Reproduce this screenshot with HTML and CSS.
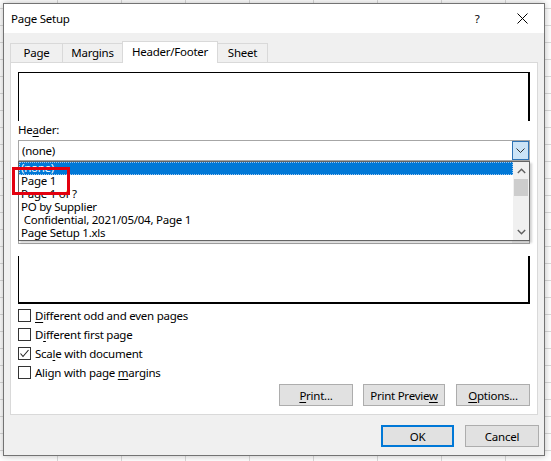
FILE: index.html
```html
<!DOCTYPE html>
<html>
<head>
<meta charset="utf-8">
<link rel="stylesheet" href="styles.css">
</head>
<body>
<div class="dialog">
  <div class="titlebar">
    <span class="title">Page Setup</span>
    <span class="help">?</span>
    <span class="close"><svg width="11" height="11" viewBox="0 0 11 11"><path d="M0.5 0.5 L10.5 10.5 M10.5 0.5 L0.5 10.5" stroke="#000" stroke-width="1" fill="none"/></svg></span>
  </div>
  <div class="content">
    <div class="tabs">
      <div class="tab tab-page">Page</div>
      <div class="tab tab-margins">Margins</div>
      <div class="tab tab-hf active">Header/Footer</div>
      <div class="tab tab-sheet">Sheet</div>
    </div>
    <div class="panel">
      <div class="preview preview-header"></div>
      <div class="label">He<u>a</u>der:</div>
      <div class="combo-wrap">
        <div class="combo">
          <span class="combo-text">(none)</span>
          <span class="drop drop-focus"><svg width="9" height="5" viewBox="0 0 9 5"><polyline points="0.5,0.5 4.5,4.5 8.5,0.5" stroke="#333" stroke-width="1" fill="none"/></svg></span>
        </div>
        <div class="list">
          <div class="rows">
            <div class="row selected">(none)</div>
            <div class="row">Page 1</div>
            <div class="row">Page 1 of ?</div>
            <div class="row">PO by Supplier</div>
            <div class="row"> Confidential, 2021/05/04, Page 1</div>
            <div class="row">Page Setup 1.xls</div>
          </div>
          <div class="scrollbar">
            <div class="sb-btn"><svg width="9" height="6" viewBox="0 0 9 6"><polyline points="0.8,5 4.5,1.3 8.2,5" stroke="#606060" stroke-width="1.4" fill="none"/></svg></div>
            <div class="sb-thumb"></div>
            <div class="sb-track"></div>
            <div class="sb-btn"><svg width="9" height="6" viewBox="0 0 9 6"><polyline points="0.8,1 4.5,4.7 8.2,1" stroke="#606060" stroke-width="1.4" fill="none"/></svg></div>
          </div>
        </div>
        <div class="annotation"></div>
      </div>
      <div class="label label-footer">Footer:</div>
      <div class="combo">
        <span class="combo-text">(none)</span>
        <span class="drop"></span>
      </div>
      <div class="preview preview-footer"></div>
      <div class="checks">
        <div class="check"><span class="box"></span><span><u>D</u>ifferent odd and even pages</span></div>
        <div class="check"><span class="box"></span><span>D<u>i</u>fferent first page</span></div>
        <div class="check"><span class="box"><svg width="11" height="11" viewBox="0 0 11 11"><polyline points="1.5,5.5 4,8.5 9.5,2" stroke="#222" stroke-width="1.1" fill="none"/></svg></span><span>Sca<u>l</u>e with document</span></div>
        <div class="check"><span class="box"></span><span>Align with page <u>m</u>argins</span></div>
      </div>
      <div class="actions">
        <button class="btn btn-print"><u>P</u>rint...</button>
        <button class="btn btn-preview">Print Previe<u>w</u></button>
        <button class="btn btn-options"><u>O</u>ptions...</button>
      </div>
    </div>
    <div class="dlg-buttons">
      <button class="btn btn-ok">OK</button>
      <button class="btn btn-cancel">Cancel</button>
    </div>
  </div>
</div>
</body>
</html>
```

FILE: styles.css
```css
* { box-sizing: border-box; }
html, body { margin: 0; }
body {
  width: 551px;
  height: 461px;
  overflow: hidden;
  padding: 3px 0 0 3px;
  font-family: "Noto Sans", "Open Sans", sans-serif;
  font-size: 11.5px;
  letter-spacing: -0.25px;
  color: #000;
  background-color: #fff;
  background-image:
    linear-gradient(to right, #dadada 1px, transparent 1px),
    linear-gradient(to bottom, #dadada 1px, transparent 1px);
  background-size: 64px 17px;
  background-position: 57px 8px;
}
u { text-decoration-thickness: 1px; text-underline-offset: 2px; }

.dialog {
  width: 542px;
  height: 453px;
  border: 1px solid #737373;
  background: #f0f0f0;
  box-shadow: 0 0 7px rgba(0,0,0,0.28);
  display: flex;
  flex-direction: column;
}
.titlebar {
  height: 29px;
  flex: none;
  background: #fff;
  display: flex;
  align-items: center;
}
.title { flex: 1; padding-left: 7px; line-height: 29px; }
.help { width: 46px; text-align: center; line-height: 29px; }
.close { width: 44px; display: flex; justify-content: center; align-items: center; }

.content {
  flex: 1;
  padding: 8px 6px 0 6px;
  display: flex;
  flex-direction: column;
}
.tabs {
  height: 21px;
  display: flex;
  align-items: flex-end;
}
.tab {
  height: 19px;
  border: 1px solid #d9d9d9;
  border-bottom: none;
  background: #f0f0f0;
  text-align: center;
  line-height: 18px;
  margin-right: -1px;
}
.tab-page { width: 53px; }
.tab-margins { width: 61px; }
.tab-hf { width: 96px; }
.tab-sheet { width: 51px; }
.tab.active {
  height: 22px;
  background: #fff;
  margin-bottom: -1px;
  position: relative;
  z-index: 1;
  line-height: 20px;
}

.panel {
  height: 353px;
  flex: none;
  background: #fff;
  border: 1px solid #d9d9d9;
  padding: 9px 6px 8px 7px;
  display: flex;
  flex-direction: column;
}
.preview { width: 512px; flex: none; }
.preview-header {
  height: 49px;
  border-top: 1px solid #000;
  border-left: 1px solid #000;
  border-right: 2px solid #000;
}
.preview-footer {
  height: 48px;
  margin-top: 12px;
  border-left: 1px solid #000;
  border-right: 2px solid #000;
  border-bottom: 2px solid #000;
}
.label {
  height: 16px;
  line-height: 16px;
  margin-top: 1px;
  margin-bottom: 2px;
}
.label-footer { margin-top: 44px; }

.combo-wrap { position: relative; }
.combo {
  width: 512px;
  height: 21px;
  border: 1px solid #a6a6a6;
  background: #fff;
  display: flex;
  align-items: center;
  flex: none;
}
.combo-text { flex: 1; padding-left: 3px; line-height: 17px; }
.drop {
  width: 17px;
  height: 19px;
  background: #f0f0f0;
  display: flex;
  align-items: center;
  justify-content: center;
}
.drop-focus {
  background: #cce4f7;
  border: 1px solid #2f73b5;
}

.list {
  position: absolute;
  left: 0;
  top: 21px;
  width: 512px;
  height: 80px;
  border: 1px solid #646464;
  background: #fff;
  display: flex;
  z-index: 2;
  box-shadow: 2px 2px 2px rgba(0,0,0,0.18);
}
.rows { flex: 1; overflow: hidden; }
.row {
  height: 13px;
  line-height: 11px;
  padding-left: 2px;
  white-space: pre;
}
.row.selected {
  background: #0078d7;
  color: #fff;
  outline: 1px dotted #9cc6ee;
  outline-offset: -1px;
}
.scrollbar {
  width: 16px;
  background: #f0f0f0;
  display: flex;
  flex-direction: column;
}
.sb-btn {
  height: 17px;
  display: flex;
  align-items: center;
  justify-content: center;
}
.sb-thumb {
  height: 17px;
  margin: 0 1px;
  background: #cdcdcd;
}
.sb-track { flex: 1; }

.annotation {
  position: absolute;
  left: -6px;
  top: 27px;
  width: 58px;
  height: 28px;
  border: 3px solid #e3000f;
  z-index: 3;
}

.checks { margin-top: 2px; }
.check {
  height: 19px;
  display: flex;
  align-items: center;
  line-height: 19px;
}
.box {
  width: 13px;
  height: 13px;
  border: 1px solid #333;
  background: #fff;
  margin-right: 4px;
  display: flex;
  align-items: center;
  justify-content: center;
}

.btn {
  height: 22px;
  border: 1px solid #adadad;
  background: #e1e1e1;
  font-family: inherit;
  font-size: inherit;
  letter-spacing: inherit;
  color: #000;
  padding: 0;
}
.actions {
  margin-top: 2px;
  display: flex;
  justify-content: flex-end;
  margin-right: 1px;
}
.btn-print { width: 74px; }
.btn-preview { width: 82px; margin-left: 10px; }
.btn-options { width: 74px; margin-left: 11px; }

.dlg-buttons {
  margin-top: 10px;
  display: flex;
  justify-content: flex-end;
  margin-right: -1px;
}
.btn-ok { width: 73px; border: 2px solid #0078d7; }
.btn-cancel { width: 74px; margin-left: 11px; }
```
